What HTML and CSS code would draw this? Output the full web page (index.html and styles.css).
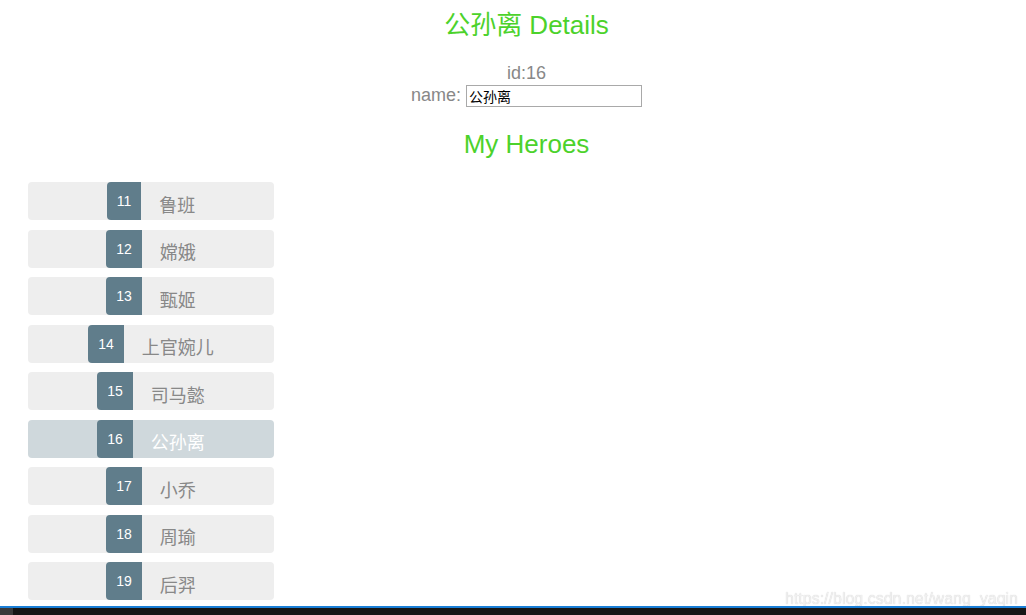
FILE: index.html
```html
<!DOCTYPE html>
<html>
<head>
	<title>Tour of Heroes</title>
	<link rel="stylesheet" href="styles.css">
</head>
<body>
	<div class="app">
		<h2 class="title">公孙离 Details</h2>
		<div class="detail">
			<div class="line">id:16</div>
			<div class="line name">
				<label>name: <input type="text" value="公孙离"></label>
			</div>
		</div>
		<h2 class="title heroes-title">My Heroes</h2>
		<ul class="heroes">
			<li><span class="badge">11</span><span class="hname">鲁班</span></li>
			<li><span class="badge">12</span><span class="hname">嫦娥</span></li>
			<li><span class="badge">13</span><span class="hname">甄姬</span></li>
			<li><span class="badge">14</span><span class="hname">上官婉儿</span></li>
			<li><span class="badge">15</span><span class="hname">司马懿</span></li>
			<li class="selected"><span class="badge">16</span><span class="hname">公孙离</span></li>
			<li><span class="badge">17</span><span class="hname">小乔</span></li>
			<li><span class="badge">18</span><span class="hname">周瑜</span></li>
			<li><span class="badge">19</span><span class="hname">后羿</span></li>
		</ul>
	</div>
	<div class="watermark">https://blog.csdn.net/wang_yaqin</div>
	<div class="taskbar"><span class="corner"></span></div>
</body>
</html>
```

FILE: styles.css
```css
body {
	margin: 0;
	font-family: "Liberation Sans", Arial, "Noto Sans CJK SC", sans-serif;
	color: #888;
	background: #fff;
	overflow: hidden;
}
.app {
	text-align: center;
}
.title,
.detail {
	margin-left: 27px;
}
.title {
	margin-top: 10px;
	margin-bottom: 0;
	font-size: 26px;
	line-height: 30px;
	font-weight: normal;
	color: #4cd22b;
}
.detail {
	margin-top: 22px;
	font-size: 18px;
}
.line {
	height: 22px;
	line-height: 22px;
}
.name {
	height: 23px;
	line-height: 23px;
}
.name input {
	box-sizing: border-box;
	width: 176px;
	height: 22px;
	padding: 0 2px;
	margin: 0;
	border: 1px solid #a9a9a9;
	font-family: "Liberation Sans", "Noto Sans CJK SC", sans-serif;
	font-size: 14px;
	color: #000;
	vertical-align: -1px;
}
.heroes-title {
	margin-top: 22px;
}
.heroes {
	list-style: none;
	margin: 23px 0 0 28px;
	padding: 0;
	width: 246px;
	display: flex;
	flex-direction: column;
	gap: 9.5px;
}
.heroes li {
	height: 38px;
	background-color: #eee;
	border-radius: 4px;
	display: flex;
	justify-content: center;
	align-items: center;
}
.heroes li.selected {
	background-color: #cfd8dc;
	color: #fff;
}
.badge {
	height: 38px;
	padding: 0 10px;
	display: flex;
	align-items: center;
	background-color: #607d8b;
	color: #fff;
	font-size: 14px;
	border-radius: 4px 0 0 4px;
	margin-right: 18px;
}
.hname {
	font-size: 18px;
	margin-top: 5px;
}
.watermark {
	position: fixed;
	right: 8px;
	bottom: 7px;
	font-size: 16px;
	color: #f0f0f0;
	text-shadow: 0 0 1px #c8c8c8;
}
.taskbar {
	position: fixed;
	left: 0;
	right: 0;
	bottom: 0;
	height: 7px;
	border-top: 2px solid #1a7ed6;
	background: #161616;
}
.corner {
	display: block;
	width: 13px;
	height: 7px;
	background: #3a3a3a;
}
```
